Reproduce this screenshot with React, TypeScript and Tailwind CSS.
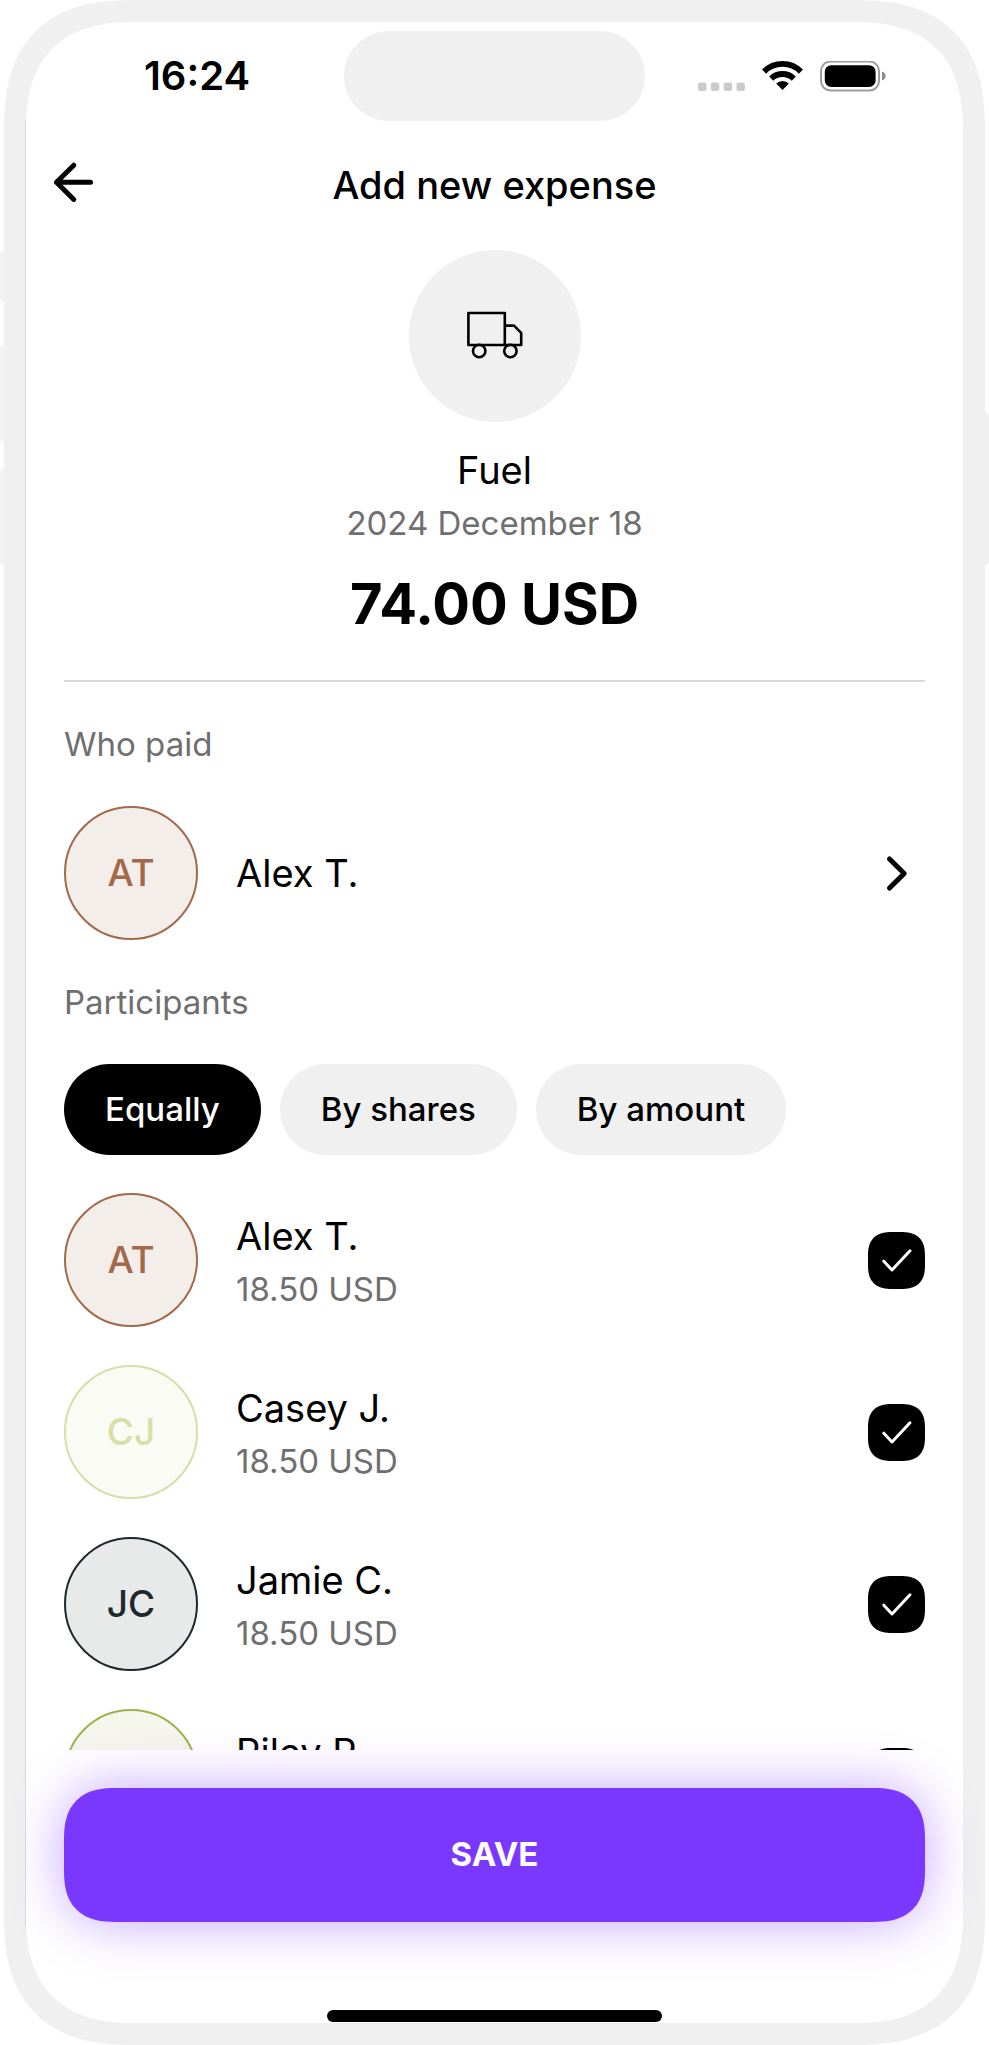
import React, { useState } from 'react';

interface Person {
  id: string;
  name: string;
  initials: string;
  colors: string;
}

const people: Person[] = [
  { id: 'alex', name: 'Alex T.', initials: 'AT', colors: 'border-[#a2694a] bg-[#f4eeea] text-[#a2694a]' },
  { id: 'casey', name: 'Casey J.', initials: 'CJ', colors: 'border-[#d6dfa8] bg-[#fafbf5] text-[#d6dfa8]' },
  { id: 'jamie', name: 'Jamie C.', initials: 'JC', colors: 'border-[#1f292d] bg-[#e8eae9] text-[#1f292d]' },
  { id: 'riley', name: 'Riley R.', initials: 'RR', colors: 'border-[#9fb24a] bg-[#f5f6ec] text-[#9fb24a]' },
];

const splitModes = ['Equally', 'By shares', 'By amount'];

const StatusBar: React.FC = () => (
  <div className="grid grid-cols-[1fr_301px_1fr] items-center px-6 pt-[9px]">
    <span className="text-center text-[40px] leading-[48px] font-semibold">16:24</span>
    <div className="h-[90px] rounded-full bg-[#f0f0f0]" />
    <div className="flex items-center justify-center gap-[17px]">
      <svg width="47" height="31" viewBox="0 0 47 31" fill="#cbcbcb">
        <rect x="0" y="21.5" width="8.5" height="8.5" rx="2.5" />
        <rect x="12.8" y="21.5" width="8.5" height="8.5" rx="2.5" />
        <rect x="25.6" y="21.5" width="8.5" height="8.5" rx="2.5" />
        <rect x="38.4" y="21.5" width="8.5" height="8.5" rx="2.5" />
      </svg>
      <svg width="41" height="31" viewBox="0 0 41 31" fill="none" stroke="#000" strokeWidth="5.8">
        <path d="M2.1 10.6A26 26 0 0 1 38.9 10.6" />
        <path d="M9.2 17.6A16.2 16.2 0 0 1 31.8 17.6" />
        <path d="M20.5 29L14.2 22.6A9 9 0 0 1 26.8 22.6Z" fill="#000" stroke="none" />
      </svg>
      <svg width="66" height="31" viewBox="0 0 66 31">
        <rect x="1" y="0.6" width="58" height="29" rx="9.5" fill="none" stroke="#9c9c9c" strokeWidth="2" />
        <rect x="4.8" y="4.2" width="50.8" height="21.8" rx="6.5" fill="#000" />
        <path d="M62 10.4Q65.6 11.8 65.6 15T62 19.6Z" fill="#8c8c8c" />
      </svg>
    </div>
  </div>
);

const TruckIcon: React.FC = () => (
  <svg width="58" height="58" viewBox="0 0 58 58" fill="none" stroke="#000" strokeWidth="2.6" strokeLinejoin="round">
    <path d="M2.4 6H38.8V38H2.4Z" />
    <path d="M38.8 18.6H48L55.2 25.8V38H38.8" />
    <circle cx="13.2" cy="44" r="6.2" />
    <circle cx="44.4" cy="44" r="6.2" />
  </svg>
);

const Avatar: React.FC<{ person: Person }> = ({ person }) => (
  <span
    className={`flex size-[134px] shrink-0 items-center justify-center rounded-full border-2 text-[37px] font-medium ${person.colors}`}
  >
    {person.initials}
  </span>
);

const App: React.FC = () => {
  const [mode, setMode] = useState('Equally');
  const [selected, setSelected] = useState<string[]>(people.map((p) => p.id));

  const toggle = (id: string) => {
    setSelected((prev) => (prev.includes(id) ? prev.filter((s) => s !== id) : [...prev, id]));
  };

  return (
    <div className="relative h-screen bg-white px-1 font-[Inter,sans-serif] text-black [font-optical-sizing:none]">
      {/* Hardware buttons on the sides of the phone */}
      <div className="absolute top-[251px] left-0 h-[51px] w-1 rounded-l-sm bg-[#f3f3f3]" />
      <div className="absolute top-[345px] left-0 h-[97px] w-1 rounded-l-sm bg-[#f3f3f3]" />
      <div className="absolute top-[468px] left-0 h-[97px] w-1 rounded-l-sm bg-[#f3f3f3]" />
      <div className="absolute top-[412px] right-0 h-[153px] w-1 rounded-r-sm bg-[#f0f0f0]" />

      <div className="relative flex h-full flex-col rounded-[108px] border-[22px] border-[#f0f0f0] supports-[corner-shape:squircle]:rounded-[132px] supports-[corner-shape:squircle]:[corner-shape:superellipse(1.35)]">
        <div className="absolute top-[97px] bottom-[97px] -left-px w-px bg-[#d8d8d8]" />

        <StatusBar />

        <header className="grid h-[129px] shrink-0 grid-cols-[57px_1fr_57px] items-center px-[19px]">
          <button type="button" aria-label="Back" className="size-[57px]">
            <svg width="57" height="57" viewBox="0 0 57 57" fill="none" stroke="#000" strokeWidth="5" strokeLinecap="round" strokeLinejoin="round">
              <path d="M45.5 25.2H11.5M28.8 8.2L11.5 25.2L28.8 42.4" />
            </svg>
          </button>
          <h1 className="text-center text-[38px] font-medium">Add new expense</h1>
        </header>

        <main className="flex min-h-0 flex-1 flex-col gap-[38px] overflow-hidden px-[38px]">
          <section className="flex shrink-0 flex-col items-center">
            <div className="flex size-[172px] items-center justify-center rounded-full bg-[#f0f0f0]">
              <TruckIcon />
            </div>
            <p className="mt-[19px] text-[38px] leading-[58px]">Fuel</p>
            <p className="text-[33px] leading-[48px] text-[#6f6f6f]">2024 December 18</p>
            <p className="mt-[19px] text-[56px] leading-[76px] font-bold">74.00 USD</p>
          </section>

          <hr className="shrink-0 border-t-2 border-[#d9d9d9]" />

          <h2 className="text-[33px] leading-[48px] text-[#6f6f6f]">Who paid</h2>
          <button type="button" className="flex shrink-0 items-center gap-[38px] text-left">
            <Avatar person={people[0]} />
            <span className="flex-1 text-[38px] leading-[58px]">{people[0].name}</span>
            <svg width="57" height="57" viewBox="0 0 57 57" fill="none" stroke="#000" strokeWidth="5" strokeLinecap="round" strokeLinejoin="round">
              <path d="M21.5 14L36.2 28.5L21.5 43" />
            </svg>
          </button>

          <h2 className="text-[33px] leading-[48px] text-[#6f6f6f]">Participants</h2>
          <div className="flex shrink-0 gap-[19px]">
            {splitModes.map((m) => (
              <button
                key={m}
                type="button"
                aria-pressed={m === mode}
                onClick={() => setMode(m)}
                className={`h-[91px] rounded-full px-[41px] text-[33px] font-medium ${
                  m === mode ? 'bg-black text-white' : 'bg-[#f0f0f0] text-black'
                }`}
              >
                {m}
              </button>
            ))}
          </div>

          {people.map((person) => (
            <label key={person.id} className="flex shrink-0 items-center gap-[38px]">
              <Avatar person={person} />
              <span className="flex flex-1 flex-col">
                <span className="text-[38px] leading-[58px]">{person.name}</span>
                <span className="text-[33px] leading-[48px] text-[#6f6f6f]">18.50 USD</span>
              </span>
              <span className="grid size-[57px]">
                <input
                  type="checkbox"
                  checked={selected.includes(person.id)}
                  onChange={() => toggle(person.id)}
                  className="peer col-start-1 row-start-1 size-full appearance-none rounded-[19px] border-2 border-black checked:bg-black supports-[corner-shape:squircle]:rounded-[24px] supports-[corner-shape:squircle]:[corner-shape:superellipse(1.35)]"
                />
                <svg
                  className="pointer-events-none invisible col-start-1 row-start-1 peer-checked:visible"
                  viewBox="0 0 57 57"
                  fill="none"
                  stroke="#fff"
                  strokeWidth="3"
                  strokeLinecap="round"
                  strokeLinejoin="round"
                >
                  <path d="M15.8 29.2L24 38L42 18.8" />
                </svg>
              </span>
            </label>
          ))}
        </main>

        <footer className="flex shrink-0 flex-col items-center px-[38px] pt-[38px] pb-px">
          <button
            type="button"
            className="h-[134px] w-full rounded-[40px] bg-[#7a38ff] text-[33px] font-bold text-white shadow-[0_0_54px_rgba(122,56,255,0.44)] supports-[corner-shape:squircle]:rounded-[52px] supports-[corner-shape:squircle]:[corner-shape:superellipse(1.35)]"
          >
            SAVE
          </button>
          <div className="mt-[88px] h-3 w-[335px] rounded-full bg-black" />
        </footer>
      </div>
    </div>
  );
};

export default App;
